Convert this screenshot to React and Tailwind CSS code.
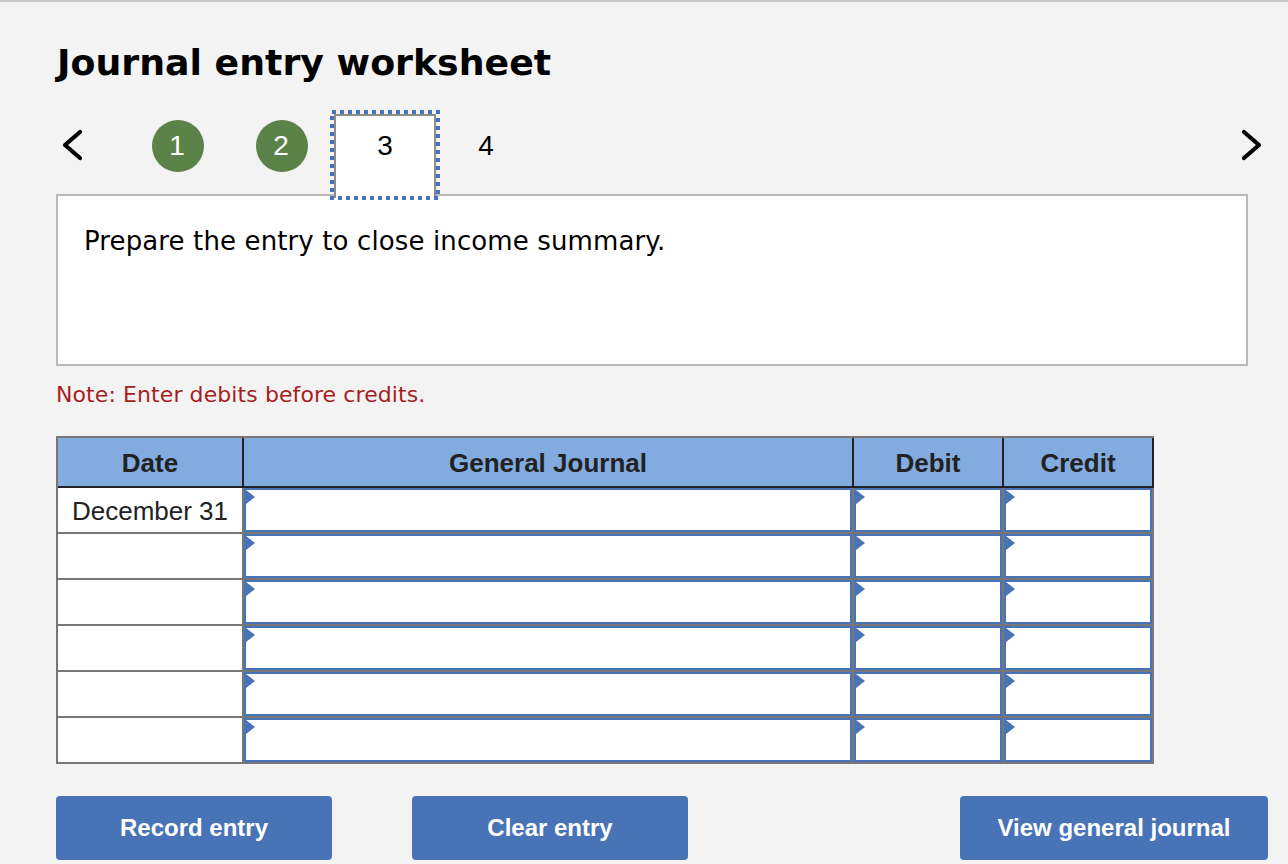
const Chevron = ({ right }) => (
  <svg width="24" height="34" viewBox="0 0 24 34" fill="none" stroke="#000" strokeWidth="4.2" strokeLinecap="round" strokeLinejoin="round" className="block">
    <polyline points={right ? "5,4 20,17 5,30" : "19,4 4,17 19,30"} />
  </svg>
);

const InputCell = ({ w }) => (
  <div className={`relative ${w} h-full border-2 border-[#4874b7] bg-white`}>
    <div className="absolute left-0 top-0 w-0 h-0 border-y-[7px] border-y-transparent border-l-[9px] border-l-[#4874b7]" />
  </div>
);

const Row = ({ date, first }) => (
  <div className={`flex ${first ? "h-[44px]" : "h-[44px] mt-[2px]"} bg-[#777]`}>
    <div className="w-[184px] h-full bg-white flex items-center justify-center text-[26px] pt-[2px] text-[#222]">{date}</div>
    <div className="w-[2px]" />
    <InputCell w="w-[608px]" />
    <div className="w-[2px]" />
    <InputCell w="w-[148px]" />
    <div className="w-[2px]" />
    <InputCell w="w-[148px]" />
  </div>
);

const Button = ({ w, children, className = "" }) => (
  <button className={`${w} ${className} h-[64px] rounded-[4px] bg-[#4874b7] text-white text-[24px] font-bold leading-none`}>
    {children}
  </button>
);

const verdana = "font-['DejaVu_Sans',sans-serif]";

export default function App() {
  return (
    <div className="w-[1288px] h-[864px] overflow-hidden bg-[#f3f3f3] border-t-2 border-[#c8c8c8] font-['Liberation_Sans',Arial,sans-serif] text-black">
      <div className="pl-[56px]">
        <h1 className={`${verdana} font-bold text-[36.3px] leading-[44px] mt-[39px] -mb-[1px] pl-[1px] h-[44px]`}>Journal entry worksheet</h1>

        <div className="flex items-start h-[84px] mt-[26px] pr-[25px] relative z-10">
          <div className="w-[96px] h-[84px] flex items-start pt-[18px] pl-[5px]"><Chevron /></div>
          <div className="w-[52px] h-[52px] mt-[10px] pr-[2px] rounded-full bg-[#5a8249] text-white text-[28px] flex items-center justify-center">1</div>
          <div className="w-[52px] h-[52px] ml-[52px] mt-[10px] pr-[2px] rounded-full bg-[#5a8249] text-white text-[28px] flex items-center justify-center">2</div>
          <div className="relative w-[110px] h-[90px] ml-[22px] shrink-0">
            <div className="absolute inset-[4px] bottom-[2px] bg-white border-x-2 border-t-2 border-[#8c8c8c] text-[28px] text-center leading-[60px]">3</div>
            <svg width="110" height="90" className="absolute inset-0">
              <rect x="2" y="2" width="106" height="86" fill="none" stroke="#4874b7" strokeWidth="4" strokeDasharray="4 4" />
            </svg>
          </div>
          <div className="w-[92px] text-[28px] text-center leading-[72px] h-[72px]">4</div>
          <div className="ml-auto pt-[18px]"><Chevron right /></div>
        </div>

        <div className={`w-[1192px] h-[172px] bg-white border-2 border-[#b8b8b8] pl-[26px] pt-[27px] ${verdana} text-[26px] tracking-[0.12px] leading-[36px] text-black`}>
          Prepare the entry to close income summary.
        </div>

        <p className={`${verdana} text-[22px] tracking-[0.09px] leading-[28px] mt-[15px] -mb-[1px] text-[#a61e1e]`}>Note: Enter debits before credits.</p>

        <div className="w-[1098px] mt-[28px] border-2 border-[#777] bg-[#777]">
          <div className="flex h-[50px] -mr-[2px] bg-[#82abe0] border-b-2 border-[#222] border-r-2 text-[26px] font-bold text-[#222]">
            <div className="w-[184px] flex items-center justify-center pt-[2px]">Date</div>
            <div className="w-[610px] border-l-2 border-[#222] flex items-center justify-center pt-[2px]">General Journal</div>
            <div className="w-[150px] border-l-2 border-[#222] flex items-center justify-center pt-[2px]">Debit</div>
            <div className="w-[150px] border-l-2 border-[#222] flex items-center justify-center pt-[2px]">Credit</div>
          </div>
          <Row date="December 31" first />
          <Row />
          <Row />
          <Row />
          <Row />
          <Row />
        </div>

        <div className="flex mt-[32px]">
          <Button w="w-[276px]">Record entry</Button>
          <Button w="w-[276px]" className="ml-[80px]">Clear entry</Button>
          <Button w="w-[308px]" className="ml-[272px]">View general journal</Button>
        </div>
      </div>
    </div>
  );
}
